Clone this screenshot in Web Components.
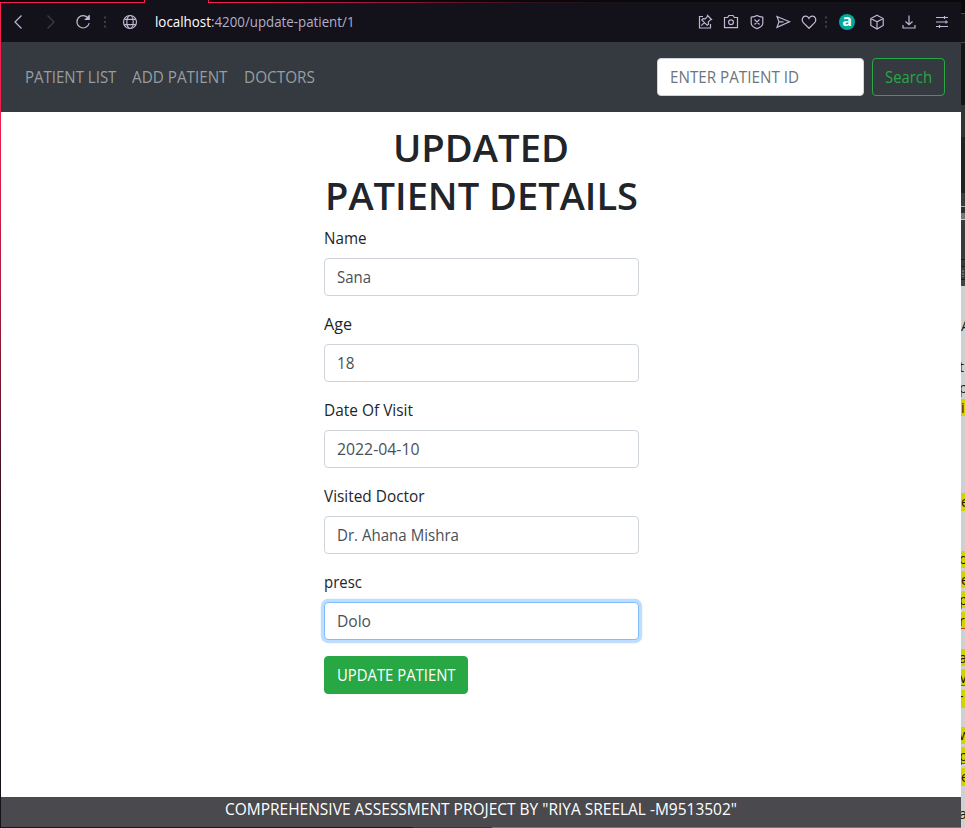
<!DOCTYPE html>
<html lang="en"><head><meta charset="utf-8"><title>Update patient</title>
<style>html,body{margin:0;background:#fff;overflow:hidden}body{font:15.700px/24px "Open Sans","Noto Sans",sans-serif;font-weight:370;color:#212529}</style></head>
<body><desktop-view></desktop-view>
<script>
const define=(name,html,after)=>customElements.define(name,class extends HTMLElement{
  connectedCallback(){
    if(this.shadowRoot)return;
    const r=this.attachShadow({mode:'open'});
    r.innerHTML=html;
    if(after)after(this,r);
  }
});

/* A run of text set to a given width. */
define('fit-text',`<style>:host{display:inline-block;white-space:pre;vertical-align:top}span{display:inline-block;transform-origin:0 50%}</style><span><slot></slot></span>`,(el,r)=>{
  const s=r.querySelector('span'),w=+el.getAttribute('w');
  const n=s.offsetWidth?s.getBoundingClientRect().width:w;
  el.style.width=w+'px';
  s.style.transform=`scaleX(${w/n})`;
});

const icons={
  back:'<path d="M12.5 3.5 6 10l6.5 6.5"/>',
  forward:'<path d="M7.5 3.5 14 10l-6.5 6.5"/>',
  reload:'<path d="M15.2 6.2A6.2 6.2 0 1 0 16.2 11M16 3.5v4h-4"/><path d="m16 4-3.5 3.5H16z" fill="currentColor"/>',
  dots:'<path d="M9 4.5h2v2H9zM9 9h2v2H9zM9 13.5h2v2H9z" fill="currentColor" stroke="none"/>',
  globe:'<circle cx="10" cy="10" r="6.5"/><ellipse cx="10" cy="10" rx="3.2" ry="6.5"/><path d="M4.3 7.3h11.4M4.3 12.7h11.4"/>',
  pin:'<path d="M8 4.500H4.500v11.500h11V12"/><path d="m12.500 3.500 4 4-1.200.4-2 2 .2 2.300-1.300 1.100-5.400-5.400L8 6.600l2.200.2 2-2zM9.300 10.700 6.300 13.700"/>',
  camera:'<path d="M3.500 5.500h3.200l1.200-2h4.200l1.200 2h3.200v10.200h-13z"/><circle cx="10" cy="10.300" r="2.400"/>',
  shield:'<path d="M4.200 5.200Q7.500 5 10 3.500q2.500 1.500 5.800 1.700V11q0 3.700-5.800 5.600Q4.200 14.700 4.200 11zM7.500 7.500l5 5m0-5-5 5"/>',
  send:'<path d="m4 4.500 12.500 5.300L4 15.300l2-5.500zM6 9.800h4.500"/>',
  heart:'<path d="M10 16.300 4.800 11.200C1.500 7.500 4 3.800 7 4.200q2 .3 3 2.300 1-2 3-2.300c3-.4 5.500 3.300 2.200 7z"/>',
  cube:'<path d="m10 3.200 6.200 3.300v7L10 17l-6.200-3.500v-7zM3.800 6.500 10 9.800l6.200-3.300M10 9.800V17"/>',
  download:'<path d="M10 3.500v9.200M6.500 9.500l3.500 3.300 3.500-3.300M4 13v3h12v-3"/>',
  sliders:'<path d="M4 5.500h12M4 10h12M4 14.500h12M12.500 4v3M14 8.500v3M7.500 13v3"/>'
};
define('line-icon','',(el,r)=>{
  r.innerHTML=`<style>:host{display:block;width:20px;height:20px;flex:none;color:#c0b8d2}svg{display:block}</style><svg width="20" height="20" viewBox="0 0 20 20" fill="none" stroke="currentColor" stroke-width="1.2">${icons[el.getAttribute('name')]}</svg>`;
});

define('address-bar',`<style>
:host{display:grid;box-sizing:border-box;grid-template-columns:8px 20px 11px 20px 13px 20px 2px 20px 5px 20px 15px 1fr auto;align-items:center;height:39px;padding-bottom:1px;background:#13111a;color:#b5aec6;font-size:14px;line-height:20px}
line-icon[name=forward],line-icon[name=dots]{color:#413d4b}
.url{display:flex;font-weight:400}.host{color:#fff}
.tools{display:flex;padding-right:9px}
.a{box-sizing:border-box;width:16px;height:16px;border-radius:50%;background:#00a99d;color:#fff;font:bold 16px/13px "Open Sans",sans-serif;text-align:center;margin:2px 2px 0 3px}
.tools>:nth-child(-n+4){margin-right:6px}.tools>:nth-child(5){margin-right:-3px}.tools>.cube{margin:0 12px 0 10px}.tools>.down{margin-right:13px}
</style><i></i><line-icon name="back"></line-icon><i></i><line-icon name="forward"></line-icon><i></i><line-icon name="reload"></line-icon><i></i><line-icon name="dots"></line-icon><i></i><line-icon name="globe"></line-icon><i></i>
<div class="url"><fit-text class="host" w="56">localhost</fit-text><fit-text w="143.500">:4200/update-patient/1</fit-text></div>
<div class="tools"><line-icon name="pin"></line-icon><line-icon name="camera"></line-icon><line-icon name="shield"></line-icon><line-icon name="send"></line-icon><line-icon name="heart"></line-icon><line-icon name="dots"></line-icon><div class="a">a</div><line-icon class="cube" name="cube"></line-icon><line-icon class="down" name="download"></line-icon><line-icon name="sliders"></line-icon></div>`);

define('tab-edge',`<style>:host{display:flex;height:3px;background:#09080b}div{box-sizing:border-box;height:3px}.l{width:144px;border-bottom:1px solid #fa1e4e;border-right:1px solid #fa1e4e}.m{width:63px;background:#13111a}.r{flex:1;border-left:1px solid #fa1e4e;background:linear-gradient(90deg,#fa1e4e,#9c1738 170px,#30101b 330px,#13111a 430px) 0 2px/100% 1px no-repeat}</style><div class="l"></div><div class="m"></div><div class="r"></div>`);

define('nav-bar',`<style>
:host{display:flex;align-items:center;height:70px;box-sizing:border-box;padding:0 16px 0 24px;background:#343a40;color:#999da0}
nav{display:flex;gap:16px;flex:1}
.box{box-sizing:border-box;height:38px;width:207px;border:1px solid #ced4da;border-radius:4px;background:#fff;color:#6c757d;padding:6px 12px}
.btn{box-sizing:border-box;height:38px;margin-left:8px;border:1px solid #28a745;border-radius:4px;color:#28a745;padding:6px 12px}
</style><nav><fit-text w="91.400">PATIENT LIST</fit-text><fit-text w="95.500">ADD PATIENT</fit-text><fit-text w="71">DOCTORS</fit-text></nav><div class="box"><fit-text w="129">ENTER PATIENT ID</fit-text></div><div class="btn"><fit-text w="47">Search</fit-text></div>`);

define('form-field','',(el,r)=>{
  const a=n=>el.getAttribute(n);
  r.innerHTML=`<style>:host{display:block;height:70px;margin-bottom:16px}
.label{height:24px;margin-bottom:8px}
.box{box-sizing:border-box;height:38px;border:1px solid #ced4da;border-radius:4px;padding:6px 12px;color:#495057;background:#fff}
:host([focused]) .box{border-color:#80bdff;box-shadow:0 0 0 3.200px #bfdeff}</style>
<div class="label"><fit-text w="${a('lw')}">${a('label')}</fit-text></div><div class="box"><fit-text w="${a('vw')}">${a('value')}</fit-text></div>`;
});

define('patient-form',`<style>
:host{display:block;width:315px;margin:0 auto;padding-top:11px}
h1{margin:0 0 7px;font-size:38.500px;line-height:48px;font-weight:570;display:flex;flex-direction:column;align-items:center}
.btn{display:inline-block;box-sizing:border-box;height:38px;border:1px solid #28a745;border-radius:4px;background:#28a745;color:#fff;padding:6px 11.500px 6px 12px}
</style><h1><fit-text w="176">UPDATED</fit-text><fit-text w="313">PATIENT DETAILS</fit-text></h1>
<form-field label="Name" lw="42.500" value="Sana" vw="34"></form-field>
<form-field label="Age" lw="28" value="18" vw="17.500"></form-field>
<form-field label="Date Of Visit" lw="89" value="2022-04-10" vw="82.500"></form-field>
<form-field label="Visited Doctor" lw="100.500" value="Dr. Ahana Mishra" vw="122"></form-field>
<form-field label="presc" lw="38" value="Dolo" vw="34" focused></form-field>
<div class="btn"><fit-text w="118.500">UPDATE PATIENT</fit-text></div>`);

define('page-footer',`<style>:host{display:block;height:30px;text-align:center;color:#fff;background:#4a494e}</style><fit-text w="512">COMPREHENSIVE ASSESSMENT PROJECT BY "RIYA SREELAL -M9513502"</fit-text>`);

/* The sliver of the document window that shows behind the browser. */
define('back-window','',(el,r)=>{
  const marks=[[399,17],[493,18],[551,17],[571,17],[591,17],[612,17],[649,17],[669,17],[690,18],[727,17],[747,17],[768,18]];
  const chars=[['A',318],['t',359],['p',380],['i',400],['e',494],['c',551],['e',572],['p',592],['r',613],['a',650],['V',670],['-',688],['w',727],['p',748],['e',769],['a',806]];
  r.innerHTML=`<style>:host{display:block;width:4px;height:828px;overflow:hidden;background:linear-gradient(#09080b 13px,#484848 13px 14px,#161616 14px 42px,#444 42px 43px,#161616 43px 105px,#333 105px 137px,#222 137px 193px,#3b3b3b 193px 206px,#b0b0b0 206px 207px,#303030 207px 213px,#777 213px 219px,#ccc 219px 220px,#3a3a3a 220px 259px,#1c1c1c 259px 260px,#3a3a3a 260px 266px,#222 266px 267px,#3c3c3c 267px 279px,#1d1d1d 279px 280px,#444 280px 286px,#d0d0d0 286px)}
svg{display:block}</style><svg width="4" height="828" font-family="Open Sans" font-size="14" font-weight="500" fill="#18180c">
${marks.map(m=>`<rect y="${m[0]}" width="4" height="${m[1]}" fill="#d2d400"/>`).join('')}
<path d="M0 628.500h4M0 685.500h4M0 763.500h4" stroke="#d33b20"/>
${chars.map(c=>`<text x="${c[0]=='A'||c[0]=='i'||c[0]=='e'?0:-2}" y="${c[1]+13}">${c[0]}</text>`).join('')}
<path d="M2 270v7" stroke="#999" stroke-dasharray="2 1"/></svg>`;
});

define('desktop-view',`<style>
:host{display:grid;grid-template-columns:1px 960px 4px;width:965px;height:828px}
.edge{background:linear-gradient(#09080b 2px,#fa1e4e 2px,#f01e4c 120px,#b41a40 280px,#70152d 400px,#30101c 510px,#13111a 620px)}
.win{display:flex;flex-direction:column;height:828px;background:#fff}
main{flex:1}
.bottom{height:1px;background:linear-gradient(90deg,#21121f 412px,#3a3339 412px 491px,#77747a 491px)}
</style><div class="edge"></div><div class="win"><tab-edge></tab-edge><address-bar></address-bar><nav-bar></nav-bar><main><patient-form></patient-form></main><page-footer></page-footer><div class="bottom"></div></div><back-window></back-window>`);
</script></body></html>
